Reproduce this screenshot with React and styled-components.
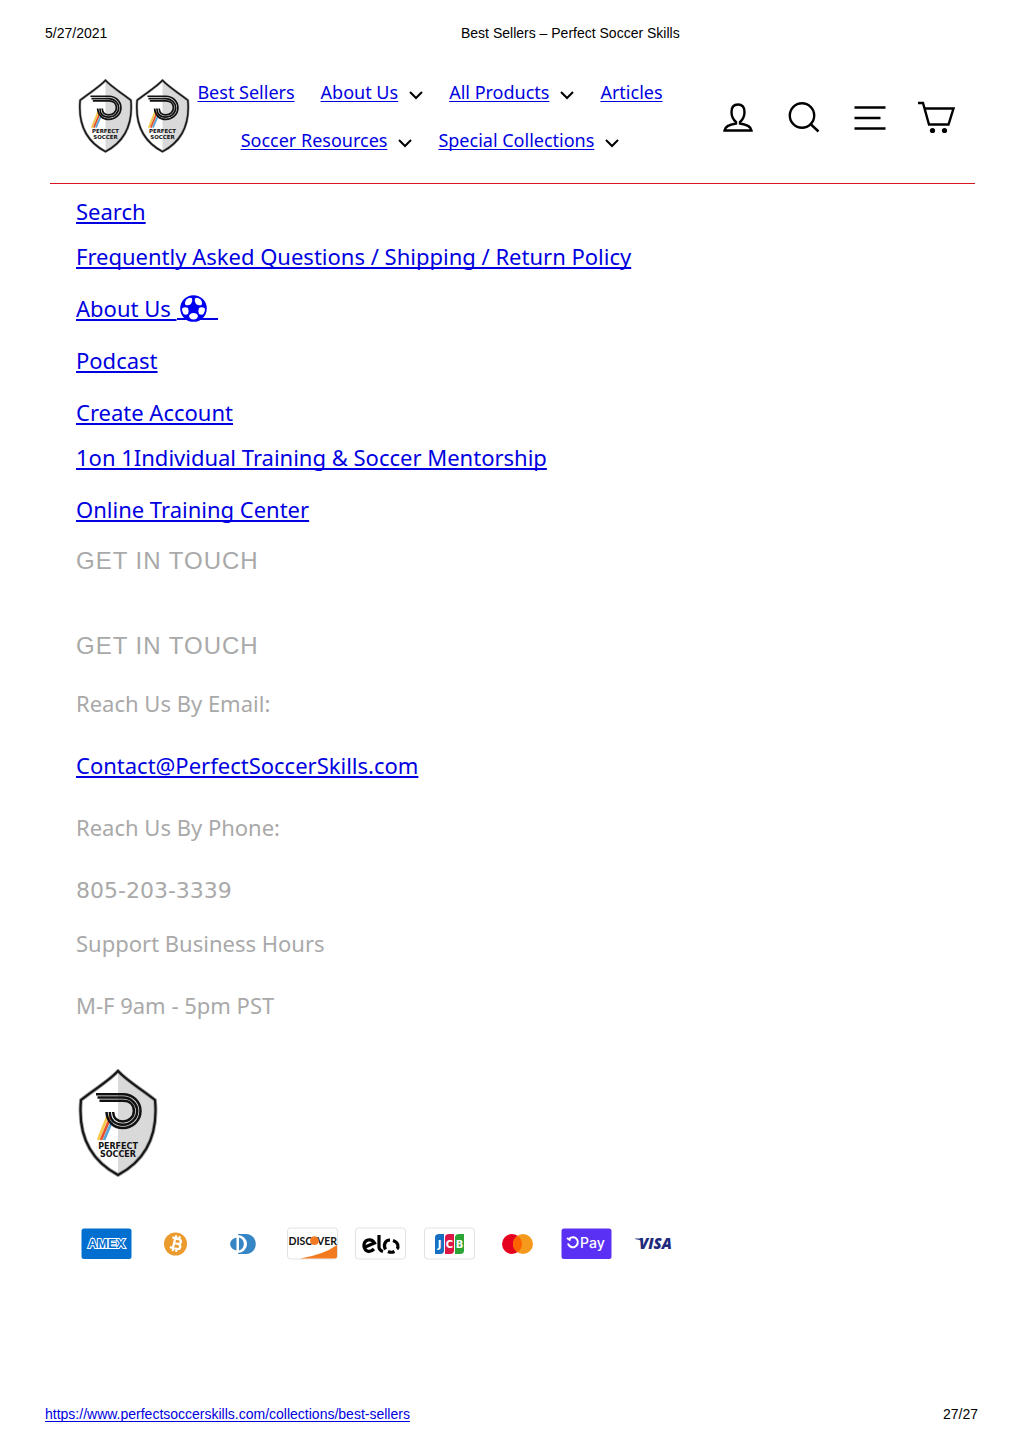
import React from "react";
import styled, { createGlobalStyle } from "styled-components";

const GlobalStyle = createGlobalStyle`
  *, *::before, *::after { box-sizing: border-box; }
  body {
    margin: 0;
    background: #fff;
    color: #000;
    font-family: "Noto Sans", "Open Sans", sans-serif;
  }
`;

const Page = styled.div`
  display: flex;
  flex-direction: column;
  min-height: 100vh;
  padding: 24px 46px 26px 45px;
`;

const PrintBar = styled.div`
  display: flex;
  font: 14px/18px "Liberation Sans", Arial, sans-serif;
`;

const PrintDate = styled.span`
  flex: 0 0 416px;
`;

const PrintFooter = styled.footer`
  display: flex;
  justify-content: space-between;
  margin-top: auto;
  font: 14px/18px "Liberation Sans", Arial, sans-serif;
`;

const TextLink = styled.a`
  color: #0000e0;
  text-decoration: underline;
  text-decoration-thickness: ${(p) => (p.$thin ? "1px" : "2px")};
  text-underline-offset: 2px;
  text-decoration-skip-ink: none;
`;

const SiteHeader = styled.header`
  display: flex;
  align-items: flex-start;
  margin: 26px 3px 0 5px;
  padding: 0 19px 0 28px;
  height: 116px;
  border-bottom: 1px solid #d8141c;
`;

const LogoLink = styled.a`
  display: flex;
  flex: none;
  gap: 2px;
  padding-top: 11px;
`;

const Nav = styled.nav`
  display: flex;
  flex: 0 1 480px;
  flex-wrap: wrap;
  justify-content: center;
  column-gap: 26px;
  margin-right: auto;
`;

const NavItem = styled.div`
  display: flex;
  align-items: center;
  height: 48px;
  font-size: 18px;
  line-height: 24px;
  white-space: nowrap;
`;

const ToggleButton = styled.button`
  display: flex;
  margin: 6px 0 0 11px;
  padding: 0;
  border: 0;
  background: none;
`;

const Tools = styled.div`
  display: flex;
  flex: none;
  gap: 30px;
  padding-top: 31px;
`;

const ToolButton = styled.button`
  display: flex;
  padding: 0;
  border: 0;
  background: none;
  color: #000;
`;

const Main = styled.main`
  padding: 11px 31px 0;
  font-size: 22px;
  line-height: 32px;
`;

const gaps = { none: 0, sm: 13, md: 20, lg: 25, xl: 30, xxl: 32, section: 53 };

const Line = styled.p`
  margin: ${(p) => gaps[p.$gap]}px 0 0;
  color: #a9a9a9;
`;

const PhoneLine = styled(Line)`
  font-family: "DejaVu Sans", sans-serif;
`;

const Heading = styled.h2`
  margin: ${(p) => gaps[p.$gap]}px 0 0;
  color: #a9a9a9;
  font: 24px/32px "Liberation Sans", Arial, sans-serif;
  letter-spacing: 1px;
`;

const BallIcon = styled.svg`
  vertical-align: -5px;
`;

const FooterLogo = styled.div`
  display: flex;
  margin: 48px 0 0 2px;
`;

const Payments = styled.ul`
  display: flex;
  justify-content: space-between;
  max-width: 600px;
  margin: 50px 0 0 5px;
  padding: 0;
  list-style: none;
`;

const Payment = styled.li`
  display: flex;
`;

const shieldPath = "M40 2C31 12 18 19 3 31C0 63 10 90 40 106C70 90 80 63 77 31C62 19 49 12 40 2Z";

function Shield({ width, height }) {
  return (
    <svg width={width} height={height} viewBox="0 0 80 108" role="img" aria-label="Perfect Soccer">
      <path d={shieldPath} fill="#fff" />
      <path d="M40 2C49 12 62 19 77 31C80 63 70 90 40 106Z" fill="#d9d9d9" />
      <path d={shieldPath} fill="none" stroke="#aaa" strokeWidth="4" />
      <path d={shieldPath} fill="none" stroke="#171717" strokeWidth="2.2" />
      <g fill="none" strokeWidth="2.7">
        <path d="M30 46L20 71" stroke="#f6c94a" />
        <path d="M32.500 48L23 71" stroke="#e5532d" />
        <path d="M35 50L26 71" stroke="#5aa5d6" />
      </g>
      <g fill="none" stroke="#111" strokeWidth="2.5">
        <path d="M18 25.200H45C55 25.200 62.500 33 62.500 42C62.500 52 54 59 45 59C36 59 29 53 28.500 43" />
        <path d="M19.500 28.500H45C53 28.500 59.200 35 59.200 42C59.200 50 52 55.700 45 55.700C37 55.700 32 51 31.800 43" />
        <path d="M21.500 31.800H45C52 31.800 55.900 36 55.900 42C55.900 48 51 52.400 45 52.400C39 52.400 35.500 49 35.100 43" />
      </g>
      <g fill="#111" fontFamily="DejaVu Sans, sans-serif" fontWeight="700" fontSize="8" textAnchor="middle">
        <text x="40" y="79.500">PERFECT</text>
        <text x="40" y="87.500">SOCCER</text>
      </g>
    </svg>
  );
}

function Chevron() {
  return (
    <svg width="14" height="10" viewBox="0 0 14 10" aria-hidden="true">
      <path d="M1 2L7 8L13 2" fill="none" stroke="#000" strokeWidth="2" />
    </svg>
  );
}

function Ball() {
  return (
    <BallIcon width="41" height="27" viewBox="-3 0 41 27" aria-label="soccer ball">
      <path d="M-3 24H38" stroke="#0000e0" strokeWidth="2" />
      <circle cx="13.500" cy="13.500" r="13.300" fill="#0000f0" />
      <g fill="#fff">
        <path d="M6.500 4.500Q9 2 12 3.200Q13 6.500 11 9Q8.500 11 5.500 10Q4 7.500 6.500 4.500Z" />
        <path d="M20.500 4.500Q18 2 15 3.200Q14 6.500 16 9Q18.500 11 21.500 10Q23 7.500 20.500 4.500Z" />
        <path d="M2 13.500Q5 11.500 8 13Q9.500 16.500 8 19Q5.500 20.500 3.500 19Q1.800 16 2 13.500Z" />
        <path d="M25 13.500Q22 11.500 19 13Q17.500 16.500 19 19Q21.500 20.500 23.500 19Q25.200 16 25 13.500Z" />
        <path d="M13.500 18Q17 18.200 18 21Q17.500 24.300 13.500 24.500Q9.500 24.300 9 21Q10 18.200 13.500 18Z" />
      </g>
    </BallIcon>
  );
}

function ToolIcon({ name }) {
  const common = { width: 36, height: 36, viewBox: "0 0 36 36", fill: "none", stroke: "#000", strokeWidth: 2.4, "aria-hidden": true };
  if (name === "Account")
    return (
      <svg {...common}>
        <path d="M16 23C13 20.500 11.500 17.500 11.500 13C11.500 8 13.500 5.500 18 5.500C22.500 5.500 24.500 8 24.500 13C24.500 17.500 23 20.500 20 23V24.500C27 25.500 31 27.500 31.500 31.500H4.500C5 27.500 9 25.500 16 24.500Z" />
      </svg>
    );
  if (name === "Search")
    return (
      <svg {...common}>
        <circle cx="16" cy="16.500" r="12.200" />
        <path d="M24.500 25L32.500 32.500" />
      </svg>
    );
  if (name === "Menu")
    return (
      <svg {...common}>
        <path d="M2.500 8.500H33.500M2.500 19H28.500M2.500 29.500H33.500" />
      </svg>
    );
  return (
    <svg {...common} width="38" viewBox="0 0 38 36">
      <path d="M0 4H5L11 25.500H30.500L35.500 9.500H6.600" />
      <circle cx="14.500" cy="31.500" r="2.600" fill="#000" stroke="none" />
      <circle cx="26.500" cy="31.500" r="2.600" fill="#000" stroke="none" />
    </svg>
  );
}

const cardArt = {
  "American Express": (
    <>
      <rect x="0.500" y="1.500" width="50" height="30.500" rx="2.500" fill="#006fcf" />
      <text x="25.500" y="21" textAnchor="middle" fontFamily="Liberation Sans, sans-serif" fontSize="13" fontWeight="700" fill="#006fcf" stroke="#fff" strokeWidth="2" paintOrder="stroke">AMEX</text>
    </>
  ),
  Bitcoin: (
    <>
      <circle cx="25.500" cy="17" r="11.500" fill="#eb9a2d" />
      <g transform="rotate(14 26 16.500)" fill="none" stroke="#fff" strokeWidth="2.200">
        <path d="M21 11.500H27C31.500 11.500 31.500 16.500 27 16.500H24H28C32 16.500 32 21.500 28 21.500H21M24 11.500V21.500M24.500 8.500V11M28 8.500V11M24.500 22V24.500M28 22V24.500" />
      </g>
    </>
  ),
  "Diners Club": (
    <>
      <path d="M20 7H28C41 7.500 41 26.500 28 27H20Z" fill="#3685c5" />
      <circle cx="20" cy="17" r="9" fill="#fff" />
      <path d="M18.500 10.500C10 12.500 10 21.500 18.500 23.500ZM21 10.500V23.500C27.500 21.500 27.500 12.500 21 10.500Z" fill="#3685c5" />
    </>
  ),
  Discover: (
    <>
      <rect x="0.500" y="1" width="50" height="31" rx="3" fill="#fff" stroke="#e2e2e2" />
      <path d="M13 31.500Q36 28 50 18V29Q50 31.500 47.500 31.500Z" fill="#f27a20" />
      <text x="1.500" y="17.500" fontFamily="Lato, sans-serif" fontSize="10.500" fontWeight="700" fill="#111">DISC</text>
      <text x="30" y="17.500" fontFamily="Lato, sans-serif" fontSize="10.500" fontWeight="700" fill="#111">VER</text>
      <circle cx="27.500" cy="13.700" r="4.400" fill="#f27a20" />
    </>
  ),
  Elo: (
    <>
      <rect x="0.500" y="1" width="50" height="31" rx="3" fill="#fff" stroke="#e2e2e2" />
      <g fill="none" stroke="#000" strokeWidth="3.200">
        <path d="M9 20.500L19.500 16C16.500 10.500 8.500 12.500 9 19.500C10.500 25.500 15.500 25.500 19 22" />
        <path d="M24 8V20.500Q24.500 23.500 28 24.500" />
        <path d="M30.500 22.500C28 18.500 30 13 35 13M38 13.500C44 15.500 43.500 20.500 42 22M39.500 24.500Q36 26 33 24.500" />
      </g>
    </>
  ),
  JCB: (
    <>
      <rect x="0.500" y="1" width="50" height="31" rx="3" fill="#fff" stroke="#e2e2e2" />
      <path d="M11 10.500Q11 7 15 7H20V23.500Q20 27 16 27H11Z" fill="#176fc1" />
      <path d="M21 10.500Q21 7 25 7H30V23.500Q30 27 26 27H21Z" fill="#dd1745" />
      <path d="M31 10.500Q31 7 35 7H40V23.500Q40 27 36 27H31Z" fill="#2ba536" />
      <g fontFamily="DejaVu Sans, sans-serif" fontSize="10" fontWeight="700" fill="#fff" textAnchor="middle">
        <text x="15.500" y="20.500">J</text>
        <text x="25.500" y="20.500">C</text>
        <text x="35.500" y="20.500">B</text>
      </g>
    </>
  ),
  Mastercard: (
    <>
      <circle cx="20" cy="17" r="10" fill="#e6001f" />
      <circle cx="31" cy="17" r="10" fill="#f59a1c" />
      <path d="M25.500 8.700A10 10 0 0 1 25.500 25.300A10 10 0 0 1 25.500 8.700Z" fill="#ff6300" />
    </>
  ),
  "Shop Pay": (
    <>
      <rect x="0.500" y="1.500" width="50" height="30.500" rx="2.500" fill="#5a31f4" />
      <path d="M6 11L9.500 13.500M8.500 11.500A5 5 0 1 1 7 16.500" fill="none" stroke="#fff" strokeWidth="2" />
      <text x="19" y="20.500" fontFamily="Inter, sans-serif" fontSize="14" fontWeight="500" fill="#fff">Pay</text>
    </>
  ),
  Visa: (
    <>
      <text x="10" y="22" fontFamily="Open Sans, sans-serif" fontSize="15" fontWeight="800" fontStyle="italic" fill="#1f2a7d">VISA</text>
      <path d="M6 11.500H12L14 15Q11 12.500 6 12Z" fill="#1f2a7d" />
    </>
  ),
};

const navItems = [
  { label: "Best Sellers" },
  { label: "About Us", menu: true },
  { label: "All Products", menu: true },
  { label: "Articles" },
  { label: "Soccer Resources", menu: true },
  { label: "Special Collections", menu: true },
];

const footerLinks = [
  { label: "Search", gap: "none" },
  { label: "Frequently Asked Questions / Shipping / Return Policy", gap: "sm" },
  { label: "About Us ", gap: "md", ball: true },
  { label: "Podcast", gap: "md" },
  { label: "Create Account", gap: "md" },
  { label: "1on 1Individual Training & Soccer Mentorship", gap: "sm" },
  { label: "Online Training Center", gap: "md" },
];

export default function App() {
  return (
    <Page>
      <GlobalStyle />
      <PrintBar>
        <PrintDate>5/27/2021</PrintDate>
        <span>Best Sellers – Perfect Soccer Skills</span>
      </PrintBar>

      <SiteHeader>
        <LogoLink href="#home">
          <Shield width={55} height={74} />
          <Shield width={55} height={74} />
        </LogoLink>
        <Nav aria-label="Main">
          {navItems.map((item) => (
            <NavItem key={item.label}>
              <TextLink $thin href="#nav">{item.label}</TextLink>
              {item.menu && (
                <ToggleButton type="button" aria-label={`Open ${item.label}`}>
                  <Chevron />
                </ToggleButton>
              )}
            </NavItem>
          ))}
        </Nav>
        <Tools>
          {["Account", "Search", "Menu", "Cart"].map((name) => (
            <ToolButton key={name} type="button" aria-label={name}>
              <ToolIcon name={name} />
            </ToolButton>
          ))}
        </Tools>
      </SiteHeader>

      <Main>
        {footerLinks.map((link) => (
          <Line key={link.label} $gap={link.gap}>
            <TextLink href="#page">
              {link.label}
              {link.ball && <Ball />}
            </TextLink>
          </Line>
        ))}
        <Heading $gap="md">GET IN TOUCH</Heading>
        <Heading $gap="section">GET IN TOUCH</Heading>
        <Line $gap="lg">Reach Us By Email:</Line>
        <Line $gap="xl">
          <TextLink href="mailto:Contact@PerfectSoccerSkills.com">Contact@PerfectSoccerSkills.com</TextLink>
        </Line>
        <Line $gap="xl">Reach Us By Phone:</Line>
        <PhoneLine $gap="xxl">805-203-3339</PhoneLine>
        <Line $gap="md">Support Business Hours</Line>
        <Line $gap="xl">M-F 9am - 5pm PST</Line>

        <FooterLogo>
          <Shield width={80} height={108} />
        </FooterLogo>
        <Payments>
          {Object.entries(cardArt).map(([name, art]) => (
            <Payment key={name}>
              <svg width="52" height="33" viewBox="0 0 52 33" role="img" aria-label={name}>
                {art}
              </svg>
            </Payment>
          ))}
        </Payments>
      </Main>

      <PrintFooter>
        <TextLink $thin href="https://www.perfectsoccerskills.com/collections/best-sellers">
          https://www.perfectsoccerskills.com/collections/best-sellers
        </TextLink>
        <span>27/27</span>
      </PrintFooter>
    </Page>
  );
}
